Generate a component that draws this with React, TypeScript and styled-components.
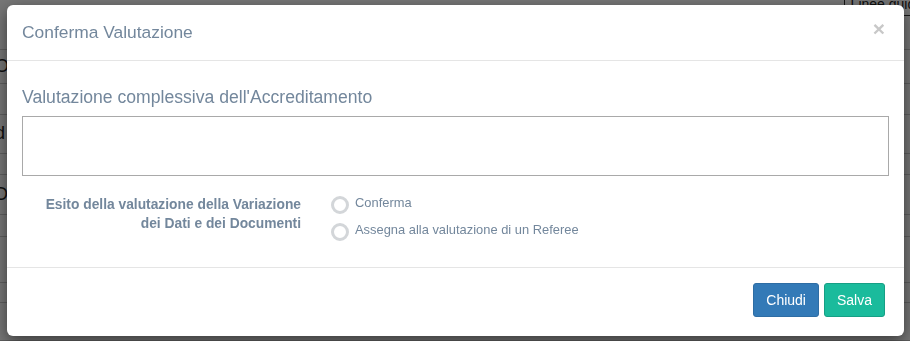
import React from "react";
import { styled, createGlobalStyle } from "styled-components";

const GlobalStyle = createGlobalStyle`
  html, body {
    margin: 0;
    padding: 0;
    width: 100%;
    height: 100%;
    overflow: hidden;
    background: #fff;
    font-family: "Liberation Sans", Arial, sans-serif;
  }
`;

// righe della pagina sotto il modale
const pageRows = [
  { h: 30, text: "" },
  { h: 36, text: "O" },
  { h: 32, text: "" },
  { h: 40, text: "d" },
  { h: 22, text: "" },
  { h: 42, text: "D" },
  { h: 22, text: "" },
  { h: 48, text: "" },
  { h: 20, text: "" },
  { h: 40, text: "" },
];

const App = () => {
  return (
    <>
      <GlobalStyle />
      <Page>
        <TopBar>
          <GuideButton>Linee guida</GuideButton>
        </TopBar>
        {pageRows.map((row, idx) => (
          <PageRow key={idx} $h={row.h}>
            {row.text}
          </PageRow>
        ))}
      </Page>
      <Backdrop>
        <Dialog>
          <Header>
            <Title>Conferma Valutazione</Title>
            <CloseButton type="button">×</CloseButton>
          </Header>
          <Body>
            <SectionTitle>Valutazione complessiva dell'Accreditamento</SectionTitle>
            <TextArea />
            <FormRow>
              <FieldLabel>
                Esito della valutazione della Variazione
                <br />
                dei Dati e dei Documenti
              </FieldLabel>
              <Options>
                <Option>
                  <Radio />
                  <OptionText>Conferma</OptionText>
                </Option>
                <Option>
                  <Radio />
                  <OptionText>Assegna alla valutazione di un Referee</OptionText>
                </Option>
              </Options>
            </FormRow>
          </Body>
          <Footer>
            <Button $variant="primary">Chiudi</Button>
            <Button $variant="success">Salva</Button>
          </Footer>
        </Dialog>
      </Backdrop>
    </>
  );
};

export default App;

const Page = styled.div`
  display: flex;
  flex-direction: column;
  width: 100%;
  height: 100vh;
  background: #fff;
  color: #333;
`;

const TopBar = styled.div`
  display: flex;
  justify-content: flex-end;
  height: 22px;
`;

const GuideButton = styled.div`
  margin-top: -8px;
  margin-right: -20px;
  padding: 0 6px;
  height: 22px;
  border: 1px solid #333;
  font-size: 14px;
  line-height: 22px;
  color: #222;
`;

const PageRow = styled.div<{ $h: number }>`
  display: flex;
  align-items: center;
  height: ${(p) => p.$h}px;
  border-bottom: 1px solid #ccc;
  font-size: 18px;
  color: #222;
  margin-left: -5px;
`;

const Backdrop = styled.div`
  position: fixed;
  inset: 0;
  display: flex;
  align-items: flex-start;
  padding: 5px 6px 0 7px;
  background: rgba(0, 0, 0, 0.54);
`;

const Dialog = styled.div`
  display: flex;
  flex-direction: column;
  width: 897px;
  height: 331px;
  background: #fff;
  border-radius: 6px;
  box-shadow: 0 5px 15px rgba(0, 0, 0, 0.5);
  color: #73879c;
`;

const Header = styled.div`
  display: flex;
  align-items: center;
  justify-content: space-between;
  height: 56px;
  padding: 0 15px;
  box-sizing: border-box;
  border-bottom: 1px solid #e5e5e5;
`;

const Title = styled.h4`
  margin: 0;
  font-size: 17.4px;
  font-weight: 400;
  color: #73879c;
`;

const CloseButton = styled.button`
  margin: -8px 4px 0 0;
  padding: 0;
  border: none;
  background: none;
  font-family: "Liberation Sans", Arial, sans-serif;
  font-size: 21px;
  font-weight: 700;
  line-height: 1;
  color: #c8c8c8;
  cursor: pointer;
`;

const Body = styled.div`
  display: flex;
  flex-direction: column;
  flex: 1;
  padding: 25px 15px 0;
`;

const SectionTitle = styled.div`
  font-size: 17.6px;
  line-height: 22px;
  color: #73879c;
  margin-bottom: 8px;
`;

const TextArea = styled.textarea`
  display: block;
  width: 100%;
  height: 60px;
  box-sizing: border-box;
  border: 1px solid #a9a9a9;
  resize: none;
  outline: none;
  margin: 0;
`;

const FormRow = styled.div`
  display: grid;
  grid-template-columns: 279px 1fr;
  column-gap: 30px;
  margin-top: 19px;
`;

const FieldLabel = styled.div`
  text-align: right;
  font-size: 13.8px;
  font-weight: 700;
  line-height: 19px;
  color: #73879c;
`;

const Options = styled.div`
  display: flex;
  flex-direction: column;
  gap: 8px;
`;

const Option = styled.label`
  display: flex;
  align-items: flex-start;
  gap: 6px;
`;

const Radio = styled.span`
  display: block;
  width: 18px;
  height: 18px;
  box-sizing: border-box;
  border-radius: 50%;
  border: 3px solid #d3d6d9;
  background: #fff;
  margin-top: 1px;
`;

const OptionText = styled.span`
  font-size: 12.9px;
  line-height: 15px;
  color: #73879c;
`;

const Footer = styled.div`
  display: flex;
  justify-content: flex-end;
  align-items: flex-start;
  gap: 5px;
  height: 69px;
  box-sizing: border-box;
  padding: 15px 19px 0 15px;
  border-top: 1px solid #e5e5e5;
`;

const Button = styled.button<{ $variant: "primary" | "success" }>`
  height: 34px;
  padding: 0 12px;
  border-radius: 3px;
  border: 1px solid
    ${(p) => (p.$variant === "primary" ? "#2e6da4" : "#169f85")};
  background: ${(p) => (p.$variant === "primary" ? "#337ab7" : "#1abb9c")};
  color: #fff;
  font-family: "Liberation Sans", Arial, sans-serif;
  font-size: 14px;
  cursor: pointer;
`;
